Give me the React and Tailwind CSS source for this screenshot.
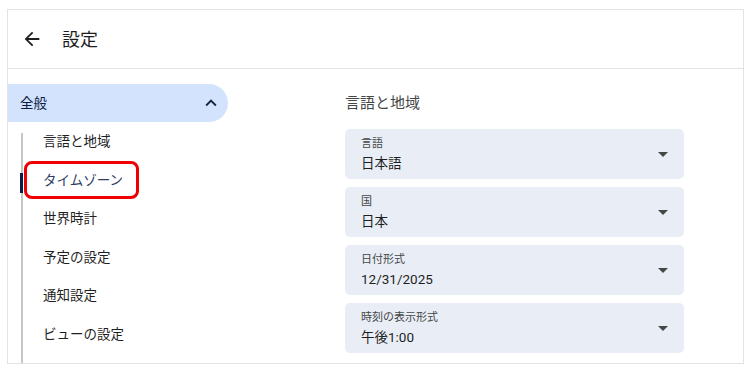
import React from 'react';

const FONT = "font-['Roboto','Noto_Sans_CJK_JP',sans-serif]";

const items = ['言語と地域', 'タイムゾーン', '世界時計', '予定の設定', '通知設定', 'ビューの設定'];

const selects = [
  { label: '言語', value: '日本語' },
  { label: '国', value: '日本' },
  { label: '日付形式', value: '12/31/2025' },
  { label: '時刻の表示形式', value: '午後1:00' },
];

const ArrowBack = () => (
  <svg viewBox="0 0 24 24" className="w-[22px] h-[22px] fill-[#1f1f1f]">
    <path d="M20 11H7.83l5.59-5.59L12 4l-8 8 8 8 1.41-1.41L7.83 13H20v-2z" />
  </svg>
);

const ExpandLess = () => (
  <svg viewBox="0 0 24 24" className="w-[22px] h-[22px] fill-[#1b2340]">
    <path d="M12 8l-6 6 1.41 1.41L12 10.83l4.59 4.58L18 14z" />
  </svg>
);

const DropDown = () => (
  <svg viewBox="0 0 10 5" className="w-[10px] h-[5px] fill-[#444746]">
    <path d="M0 0l5 5 5-5z" />
  </svg>
);

const App = () => {
  return (
    <div className={`${FONT} bg-white w-[754px] h-[375px] pt-[9px] pl-[7px] overflow-hidden`}>
      <div className="w-[737px] h-[355px] border border-[#e3e3e3] flex flex-col">
        <header className="h-[59px] shrink-0 border-b border-[#e3e3e3] flex items-center pl-[13px]">
          <ArrowBack />
          <h1 className="ml-[19px] text-[18px] text-[#1f1f1f]">設定</h1>
        </header>

        <div className="flex flex-1 min-h-0">
          <aside className="w-[220px] shrink-0 pt-[15px] flex flex-col">
            <div className="h-[38px] shrink-0 bg-[#d3e3fd] rounded-r-full flex items-center justify-between pl-[12px] pr-[6px]">
              <span className="text-[13.5px] text-[#0b1d45]">全般</span>
              <ExpandLess />
            </div>
            <div className="relative flex-1">
              <div className="absolute left-[13px] top-[11px] bottom-0 w-[2px] bg-[#c4c7c5]" />
              <ul>
                {items.map((t, i) =>
                  i === 1 ? (
                    <li
                      key={t}
                      className="relative ml-[16px] h-[38.5px] w-fit flex items-center pl-[16px] pr-[13px] border-[3px] border-[#ee0000] rounded-[8px] text-[13.5px] text-[#2d3c63]"
                    >
                      <span className="absolute left-[-7px] top-[9px] w-[3px] h-[20px] bg-[#0b1d45]" />
                      {t}
                    </li>
                  ) : (
                    <li
                      key={t}
                      className="ml-[16px] h-[38.5px] flex items-center pl-[19px] text-[13.5px] text-[#1f1f1f]"
                    >
                      {t}
                    </li>
                  )
                )}
              </ul>
            </div>
          </aside>

          <main className="flex-1 pl-[117px] pt-[23px]">
            <h2 className="text-[15px] leading-[22px] text-[#444746]">言語と地域</h2>
            <div className="mt-[15px] flex flex-col gap-[8px]">
              {selects.map((s) => (
                <div
                  key={s.label}
                  className="w-[339px] h-[50px] rounded-[5px] bg-[#e9eef6] flex items-center justify-between pl-[16px] pr-[16px]"
                >
                  <div className="flex flex-col pt-[1px]">
                    <span className="text-[11px] leading-[14px] text-[#444746]">{s.label}</span>
                    <span className="mt-[3px] text-[13.5px] leading-[18px] text-[#1f1f1f]">{s.value}</span>
                  </div>
                  <DropDown />
                </div>
              ))}
            </div>
          </main>
        </div>
      </div>
    </div>
  );
};

export default App;
